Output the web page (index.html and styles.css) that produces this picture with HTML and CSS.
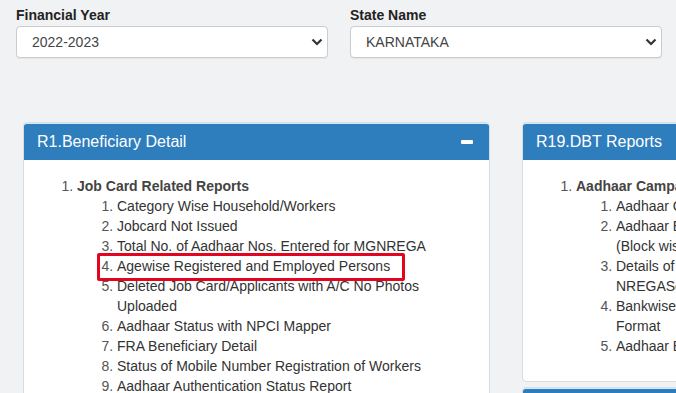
FILE: index.html
```html
<!DOCTYPE html>
<html lang="en">
<head>
    <meta charset="UTF-8">
    <meta name="viewport" content="width=device-width, initial-scale=1.0">
    <title>MGNREGA Reports</title>
    <link rel="stylesheet" href="styles.css">
</head>
<body>
    <div class="page">
        <div class="filters">
            <div class="filter">
                <label class="filter-label" for="fin-year">Financial Year</label>
                <div class="select-wrap">
                    <select id="fin-year" class="select">
                        <option>2022-2023</option>
                    </select>
                    <svg class="chevron" width="12" height="8" viewBox="0 0 12 8"><path d="M1.5 1.5 L6 6 L10.5 1.5" fill="none" stroke="#333" stroke-width="2.2"/></svg>
                </div>
            </div>
            <div class="filter">
                <label class="filter-label" for="state">State Name</label>
                <div class="select-wrap">
                    <select id="state" class="select">
                        <option>KARNATAKA</option>
                    </select>
                    <svg class="chevron" width="12" height="8" viewBox="0 0 12 8"><path d="M1.5 1.5 L6 6 L10.5 1.5" fill="none" stroke="#333" stroke-width="2.2"/></svg>
                </div>
            </div>
        </div>

        <div class="panels">
            <div class="column">
                <div class="panel">
                    <div class="panel-heading">
                        <span class="panel-title">R1.Beneficiary Detail</span>
                        <span class="minus"></span>
                    </div>
                    <div class="panel-body">
                        <ol class="report-list">
                            <li><b>Job Card Related Reports</b>
                                <ol class="sub-list">
                                    <li>Category Wise Household/Workers</li>
                                    <li>Jobcard Not Issued</li>
                                    <li>Total No. of Aadhaar Nos. Entered for MGNREGA</li>
                                    <li class="marked">Agewise Registered and Employed Persons</li>
                                    <li>Deleted Job Card/Applicants with A/C No Photos Uploaded</li>
                                    <li>Aadhaar Status with NPCI Mapper</li>
                                    <li>FRA Beneficiary Detail</li>
                                    <li>Status of Mobile Number Registration of Workers</li>
                                    <li>Aadhaar Authentication Status Report</li>
                                </ol>
                            </li>
                        </ol>
                    </div>
                </div>
            </div>
            <div class="column">
                <div class="panel">
                    <div class="panel-heading">
                        <span class="panel-title">R19.DBT Reports</span>
                        <span class="minus"></span>
                    </div>
                    <div class="panel-body">
                        <ol class="report-list">
                            <li><b>Aadhaar Campaign Reports</b>
                                <ol class="sub-list">
                                    <li>Aadhaar Campaign Status Report</li>
                                    <li>Aadhaar Enabled Payment System Transaction Status (Block wise)</li>
                                    <li>Details of Workers whose Aadhaar is seeded in NREGASoft</li>
                                    <li>Bankwise Aadhaar Seeding Status Report in Tabular Format</li>
                                    <li>Aadhaar Based Payment Status</li>
                                </ol>
                            </li>
                        </ol>
                    </div>
                </div>
                <div class="panel">
                    <div class="panel-heading">
                        <span class="panel-title">R20.Other Reports</span>
                        <span class="minus"></span>
                    </div>
                </div>
            </div>
        </div>
    </div>
</body>
</html>
```

FILE: styles.css
```css
body {
    margin: 0;
    padding: 0;
    font-family: 'Liberation Sans', Arial, sans-serif;
    font-size: 14px;
    color: #333;
    background-color: #f1f2f4;
    overflow: hidden;
}
.page {
    width: 1100px;
}
.filters {
    display: flex;
    gap: 22px;
    padding: 6px 16px 0 16px;
}
.filter {
    width: 312px;
}
.filter-label {
    display: block;
    font-weight: bold;
    line-height: 18px;
    margin-bottom: 2px;
    color: #222;
}
.select-wrap {
    position: relative;
}
.select {
    appearance: none;
    -webkit-appearance: none;
    width: 100%;
    height: 32px;
    padding: 0 15px;
    font-family: 'Liberation Sans', Arial, sans-serif;
    font-size: 14px;
    color: #444;
    background-color: #fff;
    border: 1px solid #ccc;
    border-radius: 4px;
    box-shadow: 0 1px 1px rgba(0, 0, 0, 0.06);
}
.chevron {
    position: absolute;
    right: 5px;
    top: 12px;
    pointer-events: none;
}
.panels {
    display: flex;
    gap: 32px;
    margin-top: 64px;
    padding-left: 23px;
}
.column {
    width: 467px;
}
.panel {
    background-color: #fff;
    border: 1px solid #d6dde3;
    border-radius: 4px;
    margin-bottom: 5px;
}
.panel-heading {
    display: flex;
    align-items: center;
    justify-content: space-between;
    height: 36px;
    padding: 0 16px 0 13px;
    background-color: #2e7dbd;
    border-top: 1px solid #cdeefc;
    border-radius: 3px 3px 0 0;
    color: #fff;
}
.panel-title {
    font-size: 16px;
}
.minus {
    width: 12px;
    height: 4px;
    background-color: #fff;
    border-radius: 1px;
}
.panel-body {
    padding: 16px 15px 15px 15px;
}
.report-list {
    margin: 0 0 10px 0;
    padding-left: 38px;
    line-height: 20px;
    color: #555;
}
.report-list b {
    color: #444;
}
.sub-list {
    margin: 0;
    padding-left: 40px;
}
.sub-list li {
    color: #333;
}
.sub-list li::marker {
    color: #555;
}
.marked {
    position: relative;
}
.marked::after {
    content: "";
    position: absolute;
    left: -20px;
    top: -3px;
    width: 302px;
    height: 22px;
    border: 3px solid #e3051f;
    border-radius: 2px;
}
```
